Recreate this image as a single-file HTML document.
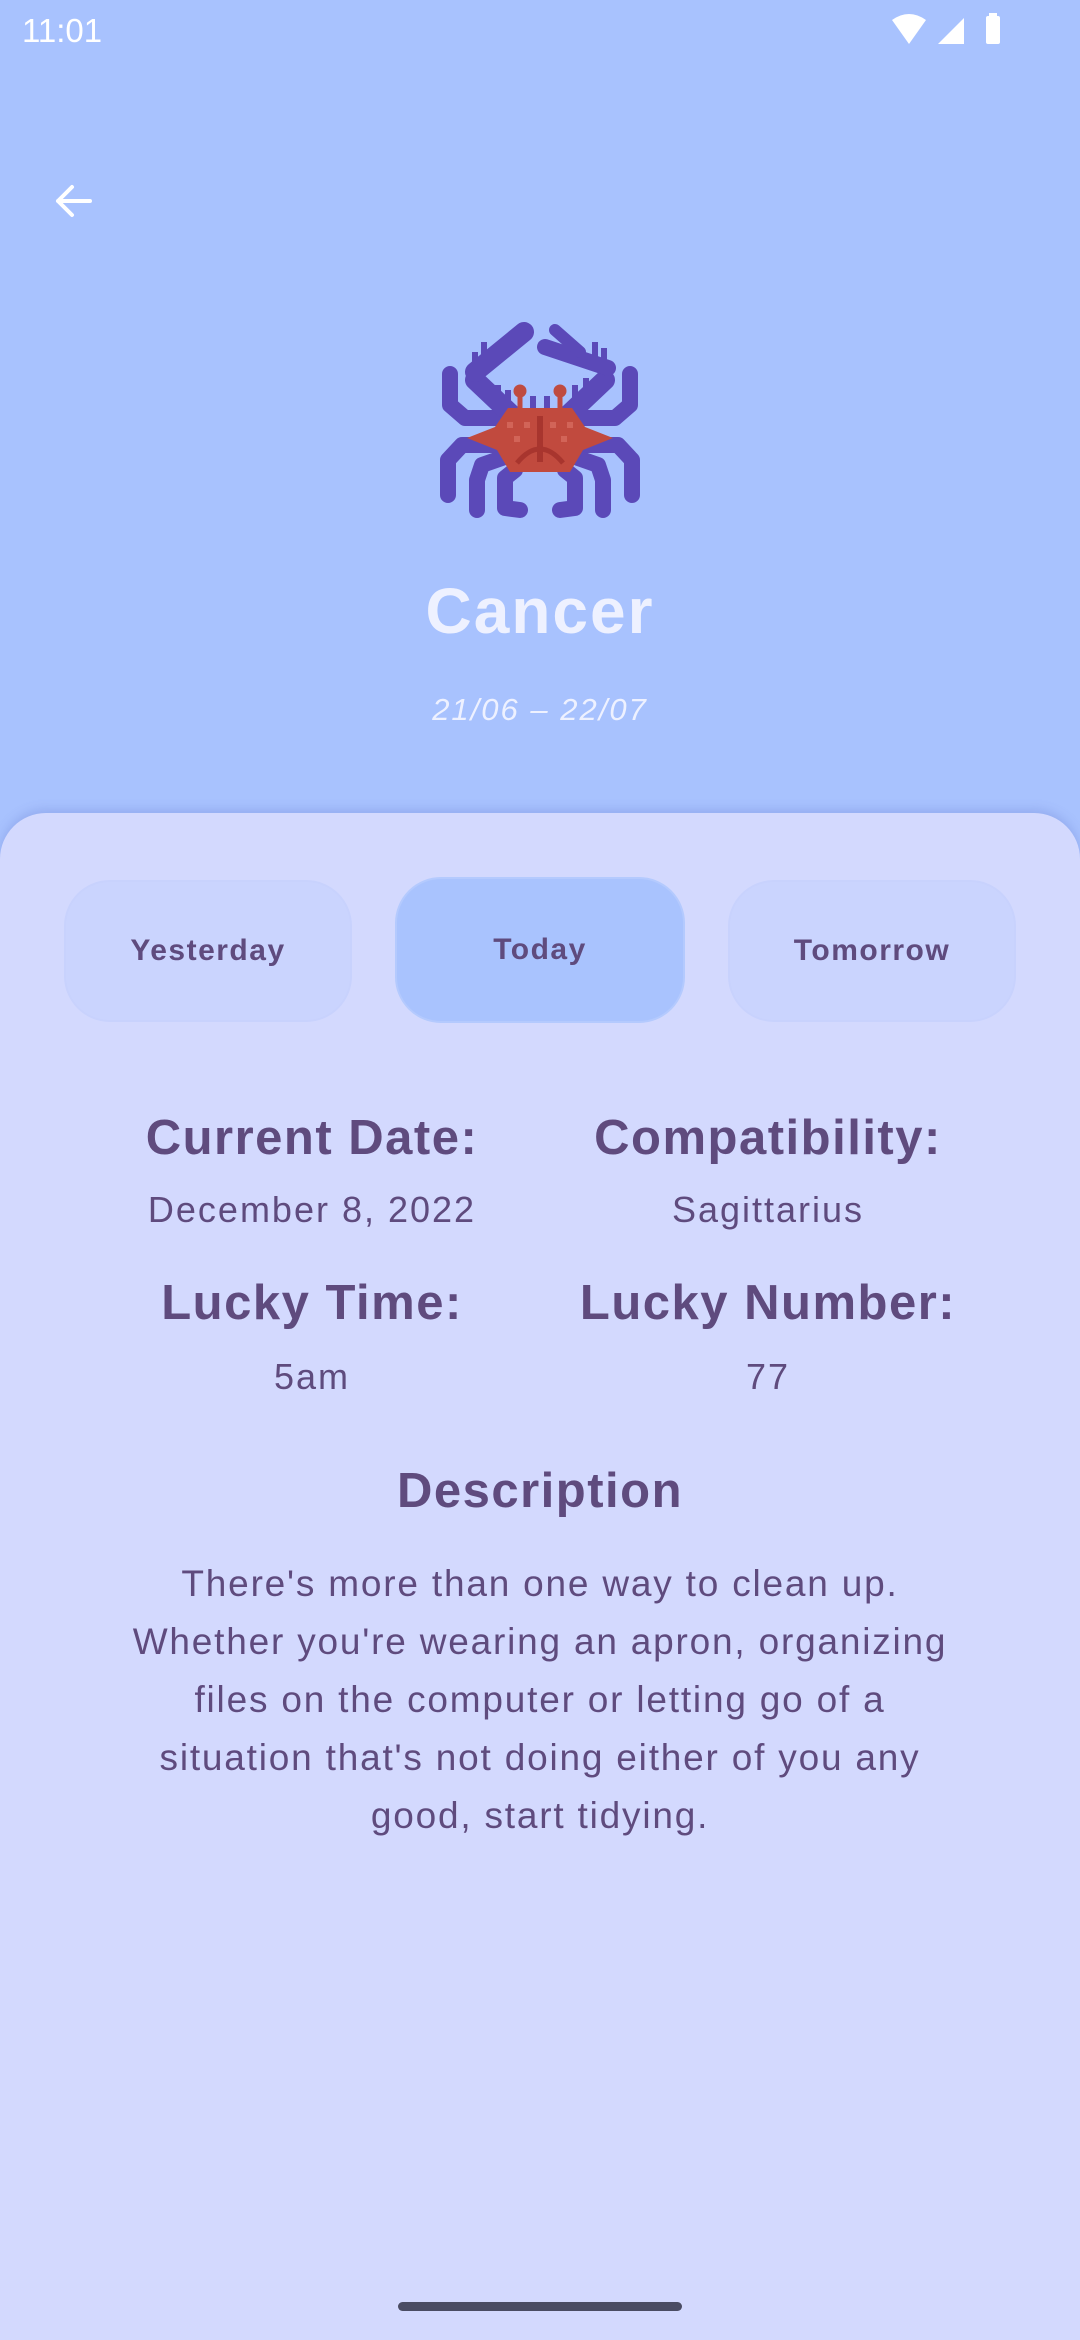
<!DOCTYPE html>
<html><head><meta charset="utf-8"><style>
*{margin:0;padding:0;box-sizing:border-box}
body{width:1080px;height:2340px;background:#a8c2fe;position:relative;overflow:hidden;font-family:"Liberation Sans",sans-serif;color:#5f4b7e}
.abs{position:absolute}
.c{text-align:center}
.sheet{position:absolute;left:0;top:813px;width:1080px;height:1527px;background:#d3d9fe;border-radius:46px 46px 0 0;box-shadow:0 -4px 10px rgba(90,110,200,.25)}
.btn{position:absolute;top:880px;height:142px;width:288px;border-radius:46px;background:#cad4fe;border:2px solid #c8d2fd;font-weight:bold;font-size:30px;letter-spacing:1.5px;display:flex;align-items:center;justify-content:center;color:#5f4b7e}
.h{font-weight:bold;font-size:49px;width:560px;text-align:center;letter-spacing:1.5px}
.v{font-size:36px;width:560px;text-align:center;letter-spacing:2px}
</style></head><body>
<div class="abs" style="left:22px;top:12px;font-size:33px;color:#fff">11:01</div>
<svg class="abs" style="left:890px;top:12px" width="120" height="36" viewBox="0 0 120 36">
<path d="M2 8 Q19 -4 36 8 L19 32 Z" fill="#fff"/>
<path d="M48 32 L74 6 L74 32 Z" fill="#fff"/>
<rect x="96" y="4" width="14" height="28" rx="2" fill="#fff"/><rect x="99" y="1" width="8" height="4" fill="#fff"/>
</svg>
<svg class="abs" style="left:50px;top:178px" width="46" height="46" viewBox="0 0 46 46"><path d="M40 23 H8 M22 9 L8 23 L22 37" stroke="#fff" stroke-width="4" fill="none" stroke-linecap="round" stroke-linejoin="round"/></svg>
<svg class="abs" style="left:420px;top:300px" width="240" height="240" viewBox="0 0 240 240">
<g stroke="#5b49b8" stroke-width="16" fill="none" stroke-linecap="round" stroke-linejoin="round">
<polyline points="78,118 45,118 30,105 30,74"/>
<polyline points="78,145 42,145 28,160 28,195"/>
<polyline points="82,158 62,165 57,180 57,210"/>
<polyline points="95,170 85,178 85,208 100,210"/>
<polyline points="162,118 195,118 210,105 210,74"/>
<polyline points="162,145 198,145 212,160 212,195"/>
<polyline points="158,158 178,165 183,180 183,210"/>
<polyline points="145,170 155,178 155,208 140,210"/>
<line x1="92" y1="115" x2="55" y2="80" stroke-width="20"/>
<line x1="55" y1="72" x2="104" y2="32" stroke-width="20"/>
<line x1="148" y1="115" x2="185" y2="80" stroke-width="20"/>
<line x1="188" y1="68" x2="125" y2="47" stroke-width="16"/>
<line x1="160" y1="52" x2="135" y2="30" stroke-width="12"/>
<line x1="55" y1="52" x2="55" y2="72" stroke-width="6" stroke-linecap="butt"/>
<line x1="64" y1="42" x2="64" y2="60" stroke-width="6" stroke-linecap="butt"/>
<line x1="78" y1="85" x2="78" y2="105" stroke-width="6" stroke-linecap="butt"/>
<line x1="88" y1="90" x2="88" y2="108" stroke-width="6" stroke-linecap="butt"/>
<line x1="113" y1="96" x2="113" y2="110" stroke-width="6" stroke-linecap="butt"/>
<line x1="127" y1="96" x2="127" y2="110" stroke-width="6" stroke-linecap="butt"/>
<line x1="155" y1="85" x2="155" y2="105" stroke-width="6" stroke-linecap="butt"/>
<line x1="166" y1="78" x2="166" y2="100" stroke-width="6" stroke-linecap="butt"/>
<line x1="175" y1="42" x2="175" y2="60" stroke-width="6" stroke-linecap="butt"/>
<line x1="184" y1="48" x2="184" y2="66" stroke-width="6" stroke-linecap="butt"/>
</g>
<line x1="100" y1="92" x2="100" y2="110" stroke="#bf4b40" stroke-width="5"/>
<line x1="140" y1="92" x2="140" y2="110" stroke="#bf4b40" stroke-width="5"/>
<circle cx="100" cy="91" r="6.5" fill="#bf4b40"/><circle cx="140" cy="91" r="6.5" fill="#bf4b40"/>
<polygon points="47,138 75,127 88,108 152,108 165,127 193,138 163,150 150,172 90,172 77,150" fill="#c14a3e"/>
<line x1="120" y1="116" x2="120" y2="162" stroke="#a8352e" stroke-width="6"/>
<path d="M97 163 Q120 135 143 163" stroke="#a8352e" stroke-width="5" fill="none"/>
<g fill="#d26458"><rect x="87" y="122" width="6" height="6"/><rect x="104" y="122" width="6" height="6"/><rect x="130" y="122" width="6" height="6"/><rect x="147" y="122" width="6" height="6"/><rect x="94" y="136" width="6" height="6"/><rect x="141" y="136" width="6" height="6"/></g>
</svg>
<div class="abs c" style="left:0;width:1080px;top:574px;font-size:64px;font-weight:bold;color:#eef1ff;letter-spacing:2px">Cancer</div>
<div class="abs c" style="left:0;width:1080px;top:692px;font-size:31px;font-style:italic;color:#eef1ff;letter-spacing:2px">21/06 – 22/07</div>
<div class="sheet"></div>
<div class="btn" style="left:64px">Yesterday</div>
<div class="btn" style="left:395px;width:290px;top:877px;height:146px;background:#a9c3fe;border-color:#b4cafe">Today</div>
<div class="btn" style="left:728px">Tomorrow</div>
<div class="abs h" style="left:32px;top:1110px">Current Date:</div>
<div class="abs h" style="left:488px;top:1110px">Compatibility:</div>
<div class="abs v" style="left:32px;top:1189px">December 8, 2022</div>
<div class="abs v" style="left:488px;top:1189px">Sagittarius</div>
<div class="abs h" style="left:32px;top:1275px">Lucky Time:</div>
<div class="abs h" style="left:488px;top:1275px">Lucky Number:</div>
<div class="abs v" style="left:32px;top:1356px">5am</div>
<div class="abs v" style="left:488px;top:1356px">77</div>
<div class="abs h" style="left:260px;top:1463px">Description</div>
<div class="abs c" style="left:10px;width:1060px;top:1555px;font-size:37px;letter-spacing:1.8px;line-height:58px">There's more than one way to clean up.<br>Whether you're wearing an apron, organizing<br>files on the computer or letting go of a<br>situation that's not doing either of you any<br>good, start tidying.</div>
<div class="abs" style="left:398px;top:2302px;width:284px;height:9px;border-radius:5px;background:#4a4c63"></div>
</body></html>
